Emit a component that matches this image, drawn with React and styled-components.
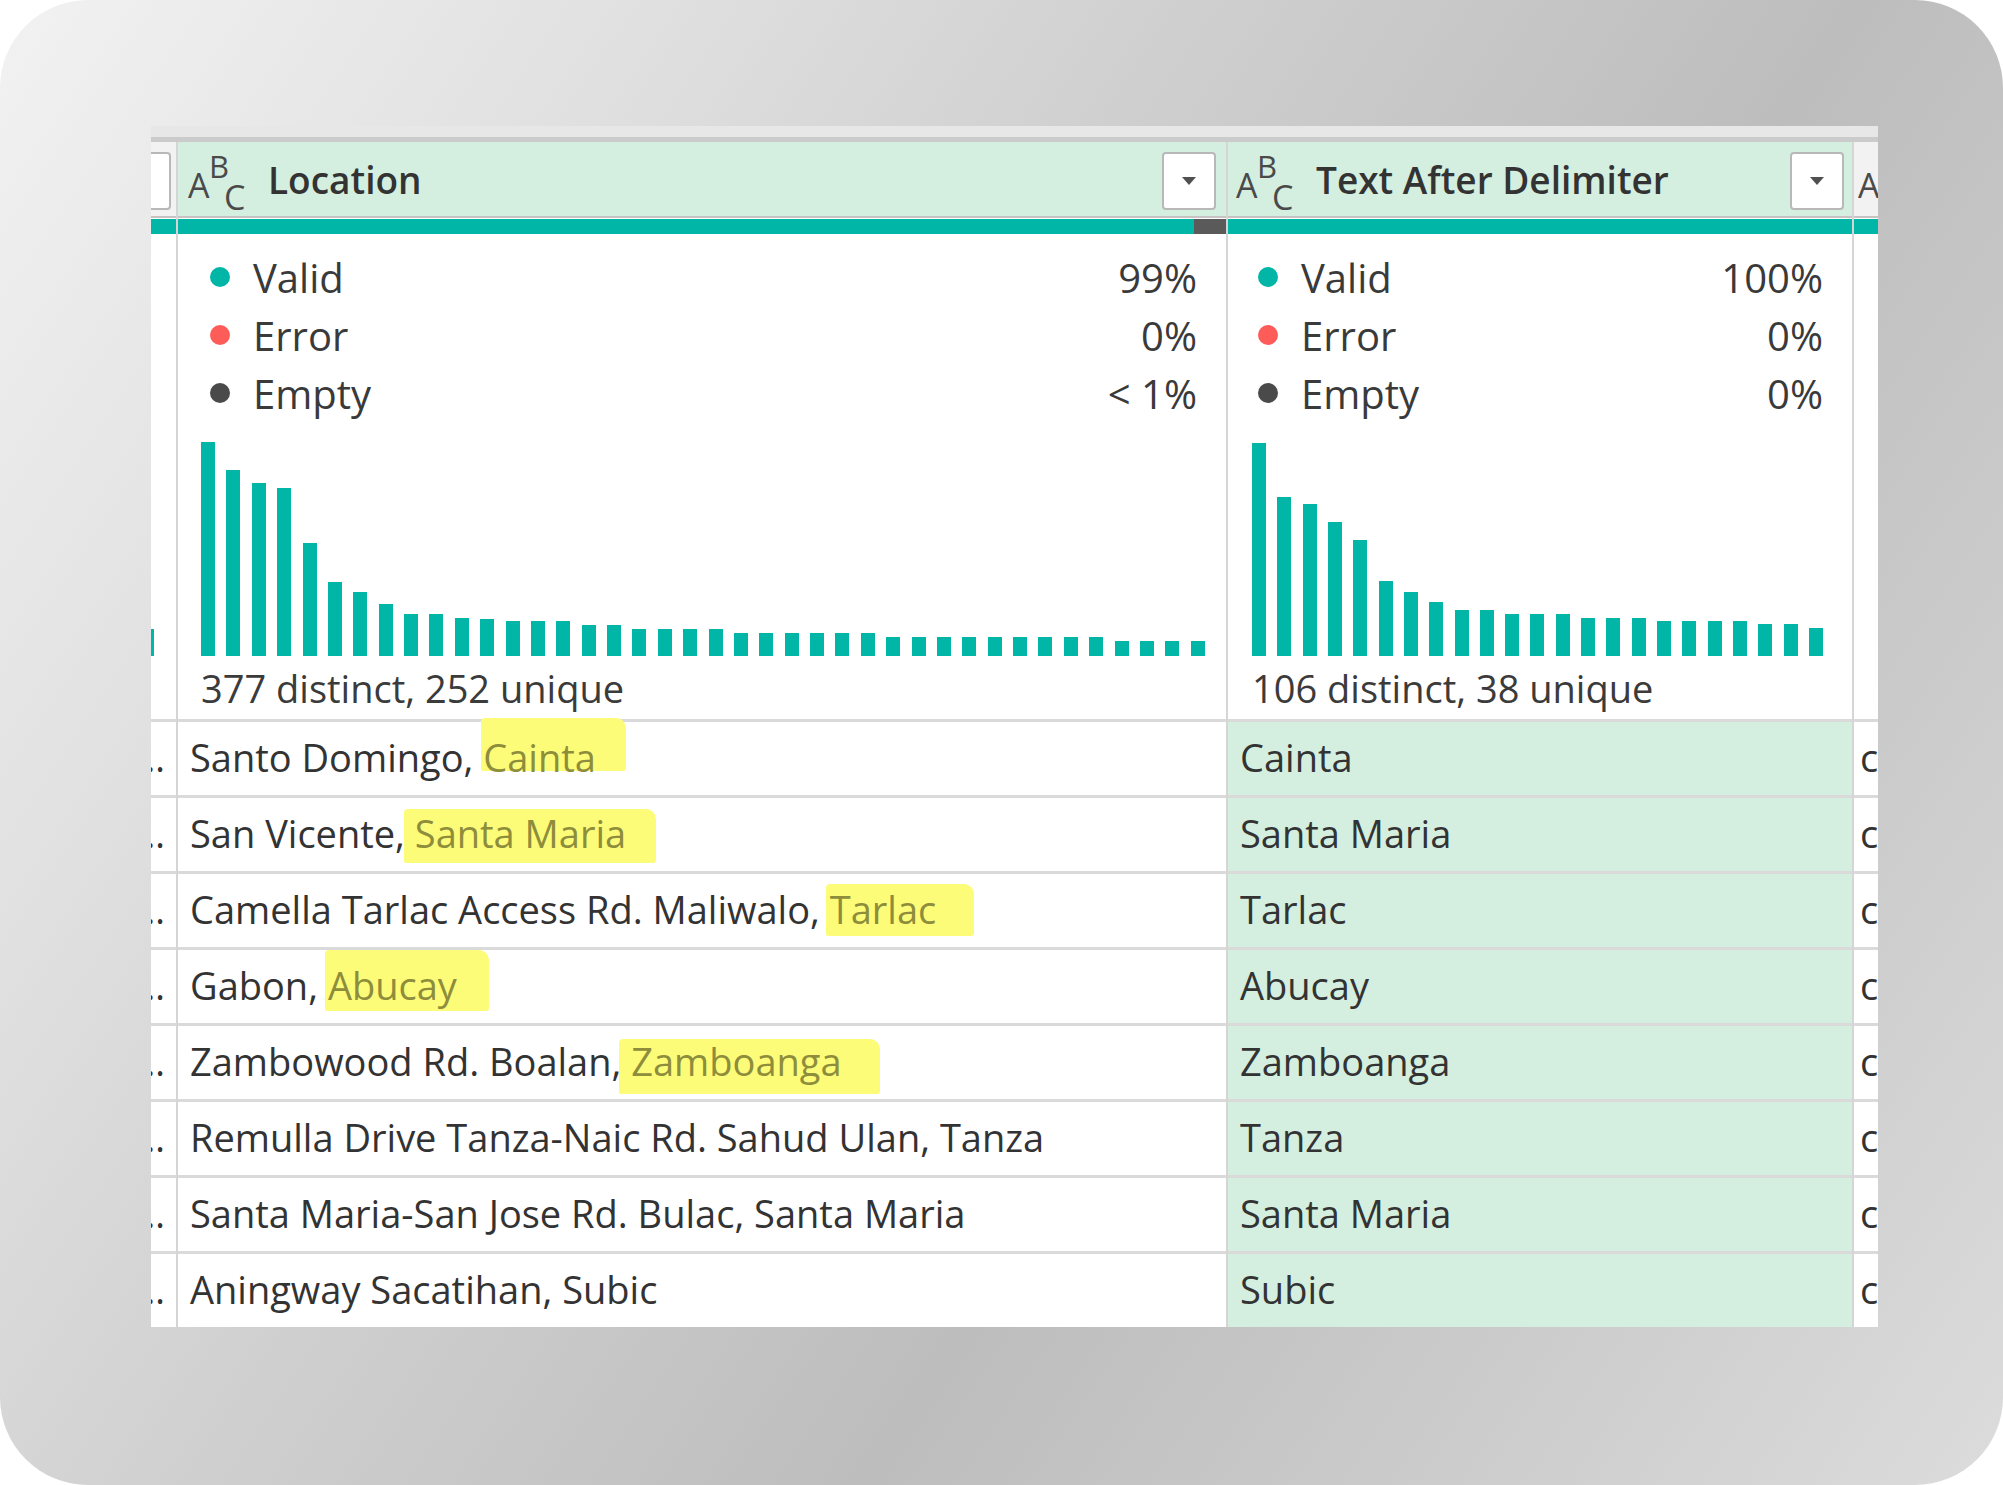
import React from 'react';
import styled, { createGlobalStyle } from 'styled-components';

const TEAL = '#01b6a6';
const GREEN = '#d4efe0';

const GlobalStyle = createGlobalStyle`
  html, body {
    margin: 0;
    padding: 0;
    background: #fff;
  }
  body {
    font-family: 'Open Sans', 'Noto Sans', sans-serif;
    color: #333;
  }
`;

const Frame = styled.div`
  width: 2003px;
  height: 1485px;
  box-sizing: border-box;
  padding: 126px 0 0 151px;
  border-radius: 88px;
  overflow: hidden;
  background: linear-gradient(
    124deg,
    #f2f2f2 0%,
    #e0e0e0 22%,
    #cfcfcf 40%,
    #bdbdbd 62%,
    #cbcbcb 80%,
    #dcdcdc 100%
  );
`;

const Shot = styled.div`
  width: 1727px;
  background: #fff;
`;

const TopStrip = styled.div`
  height: 11px;
  background: #e7e7e7;
  border-bottom: 5px solid #cbcbcb;
`;

const Columns = styled.div`
  display: flex;
`;

const Column = styled.div`
  flex: none;
  box-sizing: border-box;
  width: ${(p) => p.$width}px;
  display: flex;
  flex-direction: column;
  border-left: ${(p) => (p.$divider ? '2px solid #d5d5d5' : 'none')};
  overflow: hidden;
`;

const Header = styled.div`
  height: 74px;
  display: flex;
  align-items: center;
  padding: 0 ${(p) => p.$pad}px;
  background: ${(p) => (p.$active ? GREEN : '#f2f2f2')};
  border-bottom: 2px solid #c8c2c2;
`;

const IconSvg = styled.svg`
  flex: none;
  display: block;
  fill: #4a4a4a;
  font-family: 'Open Sans', 'Noto Sans', sans-serif;
`;

const Title = styled.span`
  margin-left: 20px;
  font-size: 37px;
  font-weight: 600;
  color: #333;
  white-space: nowrap;
`;

const Dropdown = styled.div`
  flex: none;
  box-sizing: border-box;
  width: 54px;
  height: 58px;
  margin: 4px 0 0 auto;
  display: flex;
  align-items: center;
  justify-content: center;
  background: #fff;
  border: 2px solid #b8b8b8;
  border-radius: 4px;
`;

const StubBox = styled(Dropdown)`
  width: 30px;
  margin: 4px 0 0 -10px;
`;

const Quality = styled.div`
  height: 15px;
  margin-top: 1px;
  display: flex;
`;

const QualityPart = styled.div`
  flex: ${(p) => (p.$width ? `0 0 ${p.$width}px` : '1')};
  background: ${(p) => p.$color};
`;

const Stats = styled.div`
  box-sizing: border-box;
  height: 485px;
  padding-top: 14px;
  display: flex;
  flex-direction: column;
`;

const StubStats = styled(Stats)`
  justify-content: flex-end;
  padding-bottom: 63px;
`;

const QualityRow = styled.div`
  height: 58px;
  display: flex;
  align-items: center;
  padding: 0 ${(p) => p.$right}px 0 ${(p) => p.$left}px;
  font-size: 40px;
  color: #3a3a3a;
`;

const Dot = styled.span`
  flex: none;
  width: 20px;
  height: 20px;
  border-radius: 50%;
  background: ${(p) => p.$color};
`;

const Label = styled.span`
  margin-left: 23px;
`;

const Value = styled.span`
  margin-left: auto;
`;

const Chart = styled.div`
  height: 215px;
  margin-top: 19px;
  display: flex;
  align-items: flex-end;
  justify-content: space-between;
  padding: 0 ${(p) => p.$right}px 0 ${(p) => p.$left}px;
`;

const Bar = styled.div`
  flex: none;
  width: ${(p) => p.$w || 14}px;
  background: ${TEAL};
`;

const Summary = styled.div`
  margin-top: 10px;
  padding-left: ${(p) => p.$left}px;
  line-height: 44px;
  font-size: 38px;
  color: #3b3b3b;
  white-space: nowrap;
`;

const Cell = styled.div`
  position: relative;
  z-index: 0;
  box-sizing: border-box;
  height: 76px;
  display: flex;
  align-items: center;
  justify-content: ${(p) => (p.$end ? 'flex-end' : 'flex-start')};
  padding: 0 ${(p) => p.$padR ?? 12}px 4px ${(p) => p.$padL ?? 12}px;
  border-top: 3px solid #dadada;
  background: ${(p) => (p.$active ? GREEN : '#fff')};
  font-size: 38px;
  line-height: 52px;
  color: #333;
`;

const CellText = styled.span`
  white-space: pre;
`;

const Marked = styled.span`
  position: relative;
  color: #8d8d3c;

  &::before {
    content: '';
    position: absolute;
    z-index: -1;
    top: ${(p) => p.$box[0]}px;
    right: ${(p) => p.$box[1]}px;
    bottom: ${(p) => p.$box[2]}px;
    left: ${(p) => p.$box[3]}px;
    background: #fdfc78;
    border-radius: 4px 10px 3px 2px;
  }
`;

const TypeIcon = () => (
  <IconSvg width="60" height="74" viewBox="0 0 60 74">
    <text x="0" y="56" fontSize="34">A</text>
    <text x="21" y="36" fontSize="31">B</text>
    <text x="36" y="68" fontSize="34">C</text>
  </IconSvg>
);

const Caret = () => (
  <svg width="14" height="8" viewBox="0 0 14 8">
    <polygon points="0,0 14,0 7,8" fill="#505050" />
  </svg>
);

const locationBars = [
  214, 186, 173, 168, 113, 74, 64, 52, 42, 42, 38, 37, 35, 35, 35, 31, 31, 27, 27, 27,
  27, 23, 23, 23, 23, 23, 23, 19, 19, 19, 19, 19, 19, 19, 19, 19, 15, 15, 15, 15,
];

const delimiterBars = [
  213, 159, 152, 134, 116, 75, 64, 54, 46, 46, 42, 42, 42, 38, 38, 38, 35, 35, 35, 35,
  32, 32, 28,
];

const rows = [
  { lead: 'Santo Domingo, ', city: 'Cainta', box: [-13, -30, 12, -2], dots: '……' },
  { lead: 'San Vicente, ', city: 'Santa Maria', box: [2, -30, -4, -11], dots: '……' },
  { lead: 'Camella Tarlac Access Rd. Maliwalo, ', city: 'Tarlac', box: [1, -38, -1, -4], dots: '…' },
  { lead: 'Gabon, ', city: 'Abucay', box: [-9, -32, 0, -3], dots: '…' },
  { lead: 'Zambowood Rd. Boalan, ', city: 'Zamboanga', box: [4, -38, -7, -12], dots: '…' },
  { lead: 'Remulla Drive Tanza-Naic Rd. Sahud Ulan, ', city: 'Tanza', dots: '…' },
  { lead: 'Santa Maria-San Jose Rd. Bulac, ', city: 'Santa Maria', dots: '…' },
  { lead: 'Aningway Sacatihan, ', city: 'Subic', dots: '…' },
];

const columns = [
  {
    key: 'location',
    title: 'Location',
    width: 1050,
    headPad: 10,
    empty: 32,
    stats: { left: 32, right: 29 },
    chart: { left: 23, right: 21 },
    quality: ['99%', '0%', '< 1%'],
    bars: locationBars,
    summary: '377 distinct, 252 unique',
  },
  {
    key: 'delimiter',
    title: 'Text After Delimiter',
    width: 626,
    headPad: 8,
    empty: 0,
    stats: { left: 30, right: 29 },
    chart: { left: 24, right: 29 },
    quality: ['100%', '0%', '0%'],
    bars: delimiterBars,
    summary: '106 distinct, 38 unique',
  },
];

const qualityKinds = [
  { label: 'Valid', color: TEAL },
  { label: 'Error', color: '#fd5c58' },
  { label: 'Empty', color: '#4a4a4a' },
];

const DataColumn = ({ col }) => (
  <Column $width={col.width} $divider>
    <Header $active $pad={col.headPad}>
      <TypeIcon />
      <Title>{col.title}</Title>
      <Dropdown>
        <Caret />
      </Dropdown>
    </Header>
    <Quality>
      <QualityPart $color={TEAL} />
      {col.empty > 0 && <QualityPart $color="#5a5a5a" $width={col.empty} />}
    </Quality>
    <Stats>
      {qualityKinds.map((q, i) => (
        <QualityRow key={q.label} $left={col.stats.left} $right={col.stats.right}>
          <Dot $color={q.color} />
          <Label>{q.label}</Label>
          <Value>{col.quality[i]}</Value>
        </QualityRow>
      ))}
      <Chart $left={col.chart.left} $right={col.chart.right}>
        {col.bars.map((h, i) => (
          <Bar key={i} style={{ height: h }} />
        ))}
      </Chart>
      <Summary $left={col.chart.left}>{col.summary}</Summary>
    </Stats>
    {rows.map((r, i) =>
      col.key === 'location' ? (
        <Cell key={i}>
          <CellText>
            {r.lead}
            {r.box ? <Marked $box={r.box}>{r.city}</Marked> : r.city}
          </CellText>
        </Cell>
      ) : (
        <Cell key={i} $active>
          <CellText>{r.city}</CellText>
        </Cell>
      )
    )}
  </Column>
);

export default function App() {
  return (
    <>
      <GlobalStyle />
      <Frame>
        <Shot>
          <TopStrip />
          <Columns>
            <Column $width={25}>
              <Header $pad={0}>
                <StubBox />
              </Header>
              <Quality>
                <QualityPart $color={TEAL} />
              </Quality>
              <StubStats>
                <Chart $left={0} $right={0}>
                  <Bar $w={3} style={{ height: 27 }} />
                </Chart>
              </StubStats>
              {rows.map((r, i) => (
                <Cell key={i} $end $padL={0} $padR={11}>
                  <CellText>{r.dots}</CellText>
                </Cell>
              ))}
            </Column>
            {columns.map((col) => (
              <DataColumn key={col.key} col={col} />
            ))}
            <Column $width={26} $divider>
              <Header $pad={4}>
                <TypeIcon />
              </Header>
              <Quality>
                <QualityPart $color={TEAL} />
              </Quality>
              <Stats />
              {rows.map((r, i) => (
                <Cell key={i} $padL={6} $padR={0}>
                  <CellText>c</CellText>
                </Cell>
              ))}
            </Column>
          </Columns>
        </Shot>
      </Frame>
    </>
  );
}
